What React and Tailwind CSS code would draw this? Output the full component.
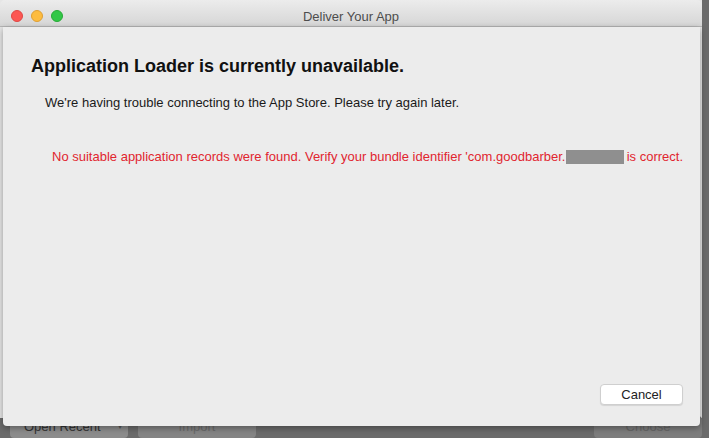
export default function App() {
  return (
    <div
      className="relative w-[709px] h-[438px] overflow-hidden bg-[#6b6b6b]"
      style={{ fontFamily: '"Liberation Sans", Arial, sans-serif' }}
    >
      {/* underlying window */}
      <div className="flex flex-col w-[702px] h-[438px] bg-[#e6e6e6]">
        <div className="relative flex items-center justify-center h-[27px] shrink-0 rounded-t-[5px] bg-gradient-to-b from-[#ececec] to-[#d6d6d6] border-b border-[#b5b5b5]">
          <div className="absolute left-[11px] top-[10px] flex gap-[8px]">
            <span className="w-[12px] h-[12px] rounded-full bg-[#fc5753] border border-[#df4744]" />
            <span className="w-[12px] h-[12px] rounded-full bg-[#fdbc40] border border-[#de9f34]" />
            <span className="w-[12px] h-[12px] rounded-full bg-[#33c748] border border-[#27aa35]" />
          </div>
          <span className="text-[13px] text-[#4d4d4d] mt-[7px]">Deliver Your App</span>
        </div>
        <div className="flex-1" />
        <div className="flex items-end h-[20px] px-[10px] bg-[#6b6b6b] gap-[10px]">
          <div className="relative flex items-center w-[118px] h-[22px] rounded-[4px] bg-[#8c8c8c] pl-[14px] text-[13px] text-[#333]">
            Open Recent
            <span className="absolute right-[6px] text-[8px] text-[#555]">▾</span>
          </div>
          <div className="flex items-center justify-center w-[118px] h-[22px] rounded-[4px] bg-[#848484] text-[13px] text-[#6a6a6a]">
            Import
          </div>
          <div className="flex-1" />
          <div className="flex items-center justify-center w-[108px] h-[22px] rounded-[4px] bg-[#7d7d7d] text-[13px] text-[#666] mr-[-10px]">
            Choose
          </div>
        </div>
      </div>

      {/* sheet */}
      <div className="absolute left-[3px] top-[27px] w-[697px] h-[399px] bg-[#ececec] rounded-b-[4px] shadow-[0_2px_6px_rgba(0,0,0,0.35)] flex flex-col pl-[28px] pr-[17px] pt-[29px] pb-[21px]">
        <h1 className="text-[18px] leading-[21px] font-bold text-[#111]">
          Application Loader is currently unavailable.
        </h1>
        <p className="mt-[18px] ml-[14px] text-[13px] leading-[16px] text-[#1a1a1a]">
          We're having trouble connecting to the App Store. Please try again later.
        </p>
        <p className="mt-[38px] ml-[21px] text-[13px] leading-[16px] text-[#e1252f] flex items-center whitespace-nowrap">
          No suitable application records were found. Verify your bundle identifier 'com.goodbarber.
          <span className="inline-block w-[59px] h-[14px] bg-[#8f8f8f] ml-[1px] mr-[3px]" />
          is correct.
        </p>
        <div className="flex-1" />
        <div className="flex justify-end">
          <button className="w-[83px] h-[21px] rounded-[4px] bg-white border border-[#cfcfcf] shadow-[0_1px_1px_rgba(0,0,0,0.1)] text-[13px] text-[#222] leading-[19px]">
            Cancel
          </button>
        </div>
      </div>
    </div>
  );
}
